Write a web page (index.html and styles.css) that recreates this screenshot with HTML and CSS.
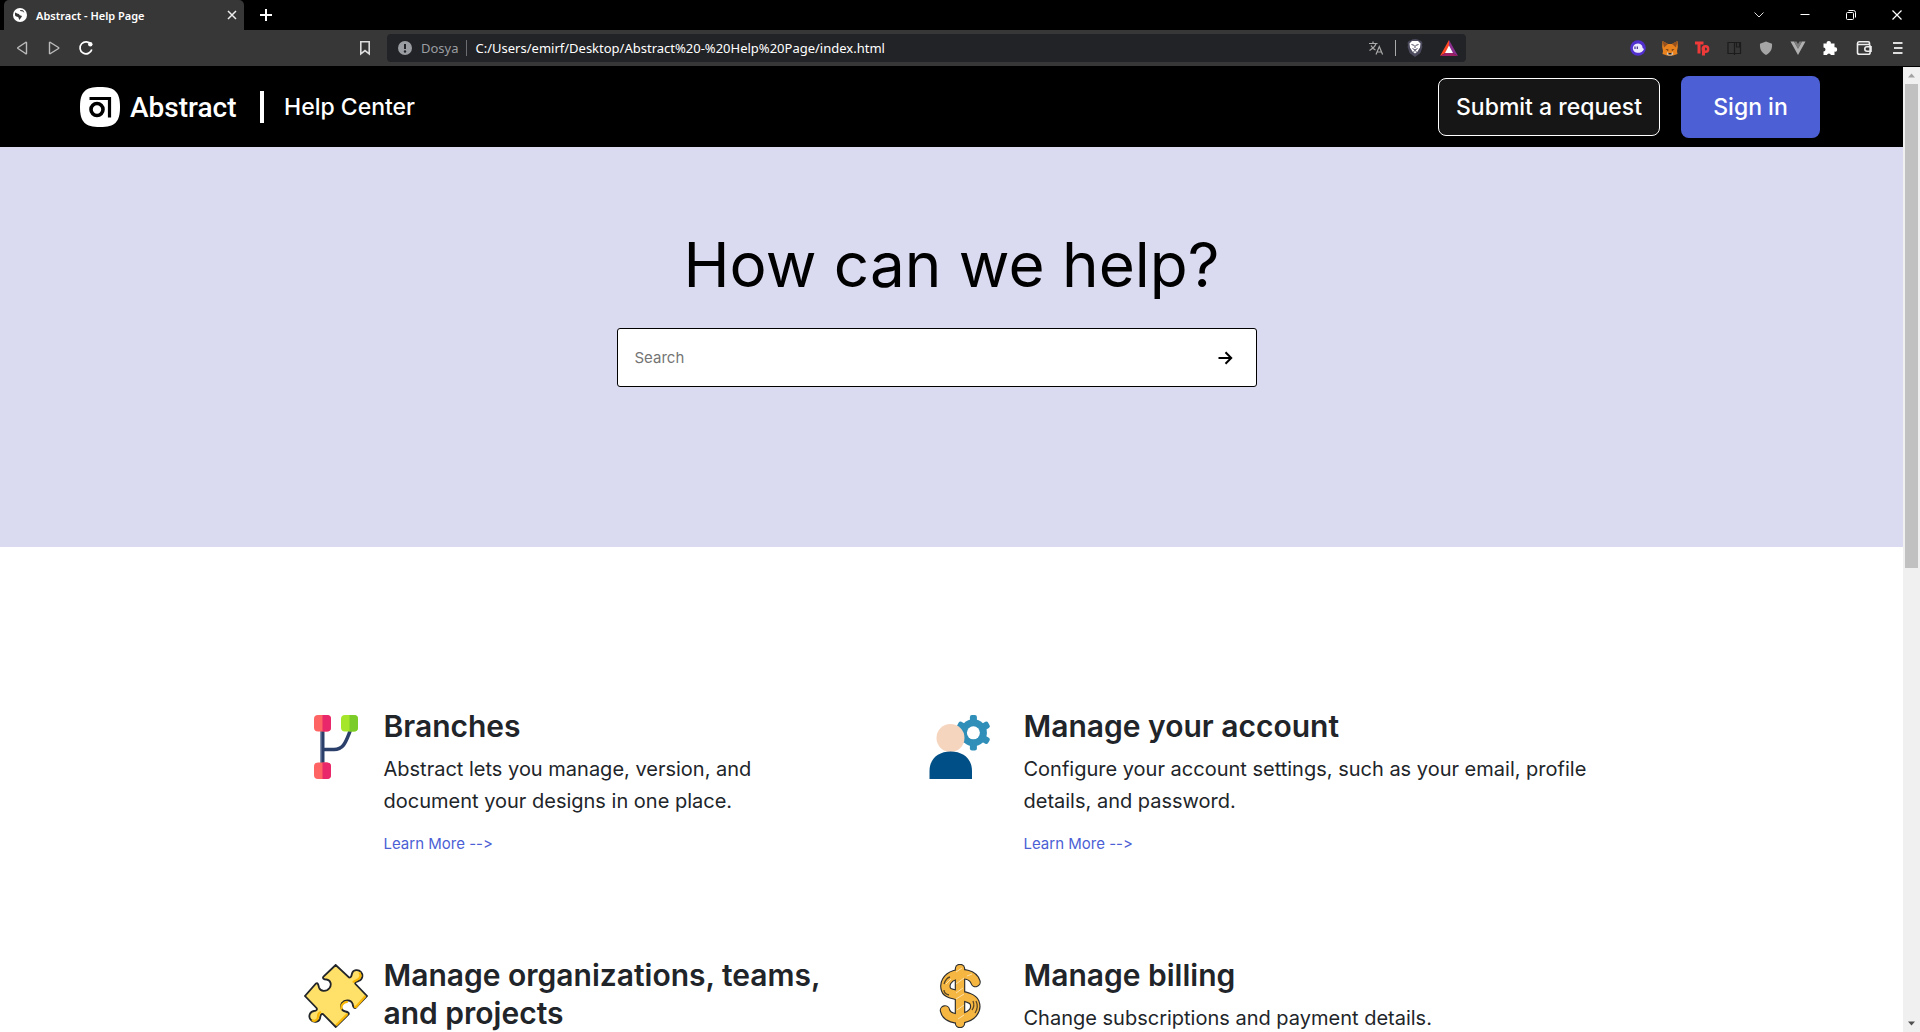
FILE: index.html
```html
<!DOCTYPE html>
<html lang="en">
<head>
<meta charset="utf-8">
<title>Abstract - Help Page</title>
<link rel="stylesheet" href="styles.css">
</head>
<body>
<div class="tabbar">
  <div class="tab">
    <svg class="favicon" viewBox="0 0 14 14" width="14" height="14"><circle cx="7" cy="7" r="7" fill="#fff"/><path d="M2 4.500c1 0 1.500 1.200 3 1.200s1 1.600 2.600 1.800 1.600 1 .6 2-1 2-2 2.300c-.6-1-.2-2-1-2.600S2 8.500 2 7zM7 2c0 1 1 1.300 2 1.200s1 1.200 2.400 1.200L10 2.300z" fill="#373737"/></svg>
    <span class="tab-title">Abstract - Help Page</span>
    <button class="icon-btn" aria-label="Close tab"><svg viewBox="0 0 16 16" width="16" height="16"><path d="M4 4l8 8M12 4l-8 8" stroke="#eee" stroke-width="1.500"/></svg></button>
  </div>
  <button class="icon-btn new-tab" aria-label="New tab"><svg viewBox="0 0 16 16" width="16" height="16"><path d="M8 2v12M2 8h12" stroke="#fff" stroke-width="2"/></svg></button>
  <div class="window-controls">
    <button class="icon-btn" aria-label="Search tabs"><svg viewBox="0 0 16 16" width="16" height="16"><path d="M3.500 5.500L8 10l4.500-4.500" fill="none" stroke="#ddd"/></svg></button>
    <button class="icon-btn" aria-label="Minimize"><svg viewBox="0 0 16 16" width="16" height="16"><path d="M3.500 7.500h9" stroke="#fff"/></svg></button>
    <button class="icon-btn" aria-label="Restore"><svg viewBox="0 0 16 16" width="16" height="16"><rect x="3.500" y="5.500" width="7" height="7" rx="1" fill="none" stroke="#fff"/><path d="M5.500 3.500h5a2 2 0 0 1 2 2v5" fill="none" stroke="#fff"/></svg></button>
    <button class="icon-btn" aria-label="Close"><svg viewBox="0 0 16 16" width="16" height="16"><path d="M3.500 3.500l9 9M12.500 3.500l-9 9" stroke="#fff" stroke-width="1.200"/></svg></button>
  </div>
</div>
<div class="toolbar">
  <div class="nav">
    <button class="icon-btn" aria-label="Back"><svg viewBox="0 0 16 16" width="16" height="16"><path d="M12.500 2.500v11q-.5.500-1 0L4 8.500q-.6-.5 0-1l7.500-5q.5-.5 1 0z" fill="none" stroke="#bbb" stroke-width="1.400"/></svg></button>
    <button class="icon-btn" aria-label="Forward"><svg viewBox="0 0 16 16" width="16" height="16"><path d="M3.500 2.500v11q.5.500 1 0l8-5q.6-.5 0-1l-8-5q-.5-.5-1 0z" fill="none" stroke="#bbb" stroke-width="1.400"/></svg></button>
    <button class="icon-btn" aria-label="Reload"><svg viewBox="0 0 16 16" width="16" height="16"><path d="M13 4.500A6 6 0 1 0 13.800 9.500" fill="none" stroke="#fff" stroke-width="1.700"/><circle cx="12.300" cy="4.300" r="2.200" fill="#fff"/></svg></button>
  </div>
  <button class="icon-btn bookmark" aria-label="Bookmark"><svg viewBox="0 0 16 16" width="16" height="16"><path d="M3.800 1.800h8.400v12L8 10.500l-4.200 3.300z" fill="none" stroke="#ddd" stroke-width="1.600"/></svg></button>
  <div class="address">
    <svg viewBox="0 0 14 14" width="14" height="14"><circle cx="7" cy="7" r="7" fill="#9a9da1"/><path d="M7 3v5" stroke="#222326" stroke-width="2"/><circle cx="7" cy="10.500" r="1.200" fill="#222326"/></svg>
    <span class="scheme">Dosya</span>
    <span class="rule"></span>
    <span class="url">C:/Users/emirf/Desktop/Abstract%20-%20Help%20Page/index.html</span>
    <div class="address-icons">
      <svg viewBox="0 0 16 16" width="16" height="16" fill="none" stroke="#aaa" stroke-width="1.200"><path d="M1 3.500h8.500M5 1.500v2M8 3.500C7 7 4 9 1.500 10.500M3 5.500c1 2 2.500 3.500 4.500 4.500M8 14.500l3.300-8 3.300 8M9.200 12h4.200"/></svg>
      <span class="rule light"></span>
      <svg viewBox="0 0 16 18" width="16" height="18"><path d="M8 0l3 .5 1 1 2 .3L15.500 4 15 6l.4 2-2 6L8 18l-5.400-4-2-6L1 6 .5 4 2 1.800l2-.3 1-1z" fill="#4c4b5e"/><path d="M5 2h6l2.500 2.500-.5 4-2.500 4L8 14.500l-2.500-2-2.500-4-.5-4z" fill="#fff"/><path d="M4.500 5.500l2.500.8M11.500 5.500L9 6.300M8 6v3M5.500 9.500L8 11l2.500-1.500M6.500 12.500L8 11.500l1.500 1" stroke="#4c4b5e" fill="none"/></svg>
      <svg viewBox="0 0 18 16" width="18" height="16"><path d="M9 0L0 16l9-5z" fill="#ff4724"/><path d="M9 0l9 16-9-5z" fill="#8b2e8e"/><path d="M0 16h18l-9-5z" fill="#9e1f63"/><path d="M9 5.500l4 7.500H5z" fill="#fff"/></svg>
    </div>
  </div>
  <div class="extensions">
    <svg viewBox="0 0 20 20" width="20" height="20"><circle cx="10" cy="10" r="7.800" fill="#5230cf"/><path d="M4.800 10a5.200 5 0 0 1 9.200-2.500c.6 1.400 0 2.500 2 3.500-1 3-4.500 4.200-7 3.800S4.800 12.500 4.800 10z" fill="#eeeaff"/><path d="M7 8.500v2.500M9.300 8.500v2.500" stroke="#41298f" stroke-width="1.200"/></svg>
    <svg viewBox="0 0 20 20" width="20" height="20"><path d="M2.500 3L8 6h4l5.500-3 .3 6-.8 4 .5 3-4.500 1.500-3 .2-3-.2L2.500 16l.5-3-.8-4z" fill="#e8821e"/><path d="M2.500 3L8 6 4 9.500zM17.500 3L12 6l4 3.500z" fill="#94501f"/><path d="M7 13.500l1 1.500h4l1-1.500.2 3-1.700 1h-3l-1.700-1z" fill="#d8c3ae"/><path d="M5.500 11l3 .5L8 13zM14.500 11l-3 .5.500 1.500z" fill="#533118"/><path d="M8.500 15h3v1.500h-3z" fill="#222"/></svg>
    <svg viewBox="0 0 20 20" width="20" height="20"><path d="M3 5h8.500M7 5v10.500M11.500 9v8.500" fill="none" stroke="#f03a3a" stroke-width="3"/><circle cx="13.500" cy="11" r="2.700" fill="none" stroke="#f03a3a" stroke-width="2.400"/></svg>
    <svg viewBox="0 0 20 20" width="20" height="20"><path d="M4 4.500h12.500v11H4zM10.500 4.500V17M12.500 5v4h3V5" fill="none" stroke="#1c1c1c" stroke-width="1.200"/></svg>
    <svg viewBox="0 0 20 20" width="20" height="20"><path d="M10 3.500l6 2.200c.4 4.500-1 8.800-6 11.300-5-2.500-6.400-6.800-6-11.300z" fill="#a5a5a5"/></svg>
    <svg viewBox="0 0 20 20" width="20" height="20"><path d="M2.500 3.500H6l4 7 4-7h3.500L10 17z" fill="#b0b0b0"/><path d="M6 3.500h2.500L10 6l1.500-2.500H14l-4 7.500z" fill="#7c7c7c"/></svg>
    <svg viewBox="0 0 20 20" width="20" height="20"><path d="M3.500 5.500h3.200a2.100 2.100 0 1 1 4.100 0h3.700v3.800a2.200 2.200 0 1 1 0 4.300V17h-3.600a2 2 0 0 0-3.900 0H3.500v-3.500a2 2 0 0 0 0-4z" fill="#fff"/></svg>
    <svg class="wide" viewBox="0 0 20 20" width="20" height="20"><path d="M15.500 6V5q0-1.200-1.200-1.200H5Q3.500 3.800 3.500 5.500v9q0 1.800 1.800 1.800h9q1.800 0 1.800-1.800V8q0-1.500-1.500-1.500H4M17 8.800h-4a2.200 2.200 0 0 0 0 4.400h4z" fill="none" stroke="#eee" stroke-width="1.600"/></svg>
    <svg class="wide" viewBox="0 0 20 20" width="20" height="20"><path d="M5 5h9.500M6 10h8.500M5 15h9.500" stroke="#ddd" stroke-width="2"/></svg>
  </div>
</div>

<div class="viewport">
  <div class="page">
    <header class="site-header">
      <a class="logo" href="#">
        <svg viewBox="0 0 40 40" width="40" height="40"><path d="M20 0c15 0 20 5 20 20s-5 20-20 20S0 35 0 20 5 0 20 0z" fill="#fff"/><path d="M9.500 11.500H29.500V30.500" fill="none" stroke="#000" stroke-width="3.200"/><circle cx="17" cy="22.500" r="6" fill="none" stroke="#000" stroke-width="3.600"/></svg>
        <span>Abstract</span>
      </a>
      <span class="divider"></span>
      <a class="help-center" href="#">Help Center</a>
      <div class="actions">
        <button class="btn submit">Submit a request</button>
        <button class="btn signin">Sign in</button>
      </div>
    </header>
    <section class="hero">
      <h1>How can we help?</h1>
      <form class="search">
        <input type="search" placeholder="Search" aria-label="Search">
        <button type="button" class="icon-btn" aria-label="Go"><svg viewBox="0 0 16 16" width="16" height="16"><path d="M1.500 8H14M8.500 2.300L14.200 8l-5.700 5.700" fill="none" stroke="#000" stroke-width="2"/></svg></button>
      </form>
    </section>
    <main class="topics">
      <article class="topic">
        <svg viewBox="0 0 64 64" width="64" height="64"><path d="M46.500 15C42 26 40 34.500 30 34.500H19" fill="none" stroke="#2b3f6b" stroke-width="3.500"/><path d="M18.500 14v36" stroke="#2b3f6b" stroke-width="4"/><path d="M17 14v36" stroke="#7382a3" stroke-width="1"/><rect x="10" y="0" width="17" height="16.500" rx="4" fill="#ff6464"/><path d="M18.500 0H23q4 0 4 4v8.500q0 4-4 4h-4.500z" fill="#e8286b"/><rect x="10" y="47.500" width="17" height="16.500" rx="4" fill="#ff6464"/><path d="M18.500 47.500H23q4 0 4 4V60q0 4-4 4h-4.500z" fill="#e8286b"/><rect x="37" y="0" width="17" height="16.500" rx="4" fill="#a5e62b"/><path d="M45.500 0H50q4 0 4 4v8.500q0 4-4 4h-4.500z" fill="#7bcc29"/></svg>
        <div>
          <h2>Branches</h2>
          <p>Abstract lets you manage, version, and document your designs in one place.</p>
          <a href="#">Learn More --&gt;</a>
        </div>
      </article>
      <article class="topic">
        <svg viewBox="0 0 64 64" width="64" height="64"><g fill="#308fb8"><circle cx="45.400" cy="17.800" r="13.500"/><rect x="41.900" y="0" width="7" height="35.600" rx="2"/><rect x="41.900" y="0" width="7" height="35.600" rx="2" transform="rotate(60 45.400 17.800)"/><rect x="41.900" y="0" width="7" height="35.600" rx="2" transform="rotate(120 45.400 17.800)"/></g><circle cx="45.400" cy="17.800" r="6.500" fill="#fff"/><circle cx="22.500" cy="23" r="14" fill="#f6d5bf"/><path d="M1.500 64V56C1.500 44 10 36.500 22.700 36.500S44 44 44 56v8z" fill="#004f87"/></svg>
        <div>
          <h2>Manage your account</h2>
          <p>Configure your account settings, such as your email, profile details, and password.</p>
          <a href="#">Learn More --&gt;</a>
        </div>
      </article>
      <article class="topic">
        <svg viewBox="0 0 64 64" width="64" height="64"><path d="M31.700 1L19.500 12.500c-1.500 2 .5 3 3 3 4 .5 5.500 5 3 8.500-3 4-9 4-10.500-.5-.6-2.500-1-5-3-4L1 32l11.500 12c1 1.500 0 3-2.500 3-4 .5-6 5-3.500 8.500s8.500 3 9.500-1c.5-3 1-5 3-4.500L31.700 63 44.500 50.500c1-1.500-.5-2.500-3-3-4-.5-5.500-5-3.500-8.500 3-4 9-3 10.500.5.500 2.500 1 5 3 4.500L63 32 51.500 20c-1-1.500.5-2.500 3-3 4-1 5-6 2.500-9s-8-2.500-9 1.500c-.5 2.500-1 4.500-3 4z" fill="#ffe069" stroke="#222529" stroke-width="1.800"/><path d="M32 61.500L43.500 50M8 56c3 2 6 0 6-3.500 0-2 1-4 3-4.500M37.800 45.500c-1.500-4 2-8 6-7.500M50 42.500l2 .5 9.500-11M49 18.500c2-3 7-2 7.500-7l-1-3" fill="none" stroke="#f9b806" stroke-width="2.200"/></svg>
        <div>
          <h2>Manage organizations, teams, and projects</h2>
        </div>
      </article>
      <article class="topic">
        <svg viewBox="0 0 64 64" width="64" height="64" fill="none"><g stroke="#2d2e30" stroke-width="10.500" stroke-linecap="round"><path d="M32 5v54"/><path d="M47.500 18C45 10 34 9 27 11c-8 2.500-11 9-9 14.500C20.500 33 43 30 46.500 38.500c3 8-3.500 14-11 15.500C28 55.500 18.500 53.500 17 46.500"/></g><g stroke="#f5b642" stroke-width="8.200" stroke-linecap="round"><path d="M47.500 18C45 10 34 9 27 11c-8 2.500-11 9-9 14.500C20.500 33 43 30 46.500 38.500c3 8-3.500 14-11 15.500C28 55.500 18.500 53.500 17 46.500"/><path d="M32 5v54"/></g><path d="M28 8l6-4M28 20l8-6M28 29l7-5M28 35l8-5M29 46l7-5M30 55l6-4M18 20l5-5M39 12l5-2" stroke="#fbe0ab" stroke-width="1"/><path d="M16 20q2-6 6-7M16 26q0 4 5 5M48 37q3 6-1 12M45 37q2 5-1 9" stroke="#5a4726" stroke-width="1.300"/></svg>
        <div>
          <h2>Manage billing</h2>
          <p>Change subscriptions and payment details.</p>
        </div>
      </article>
    </main>
  </div>
  <div class="scrollbar">
    <svg viewBox="0 0 17 17" width="17" height="17"><path d="M8.500 6.500l3.500 4H5z" fill="#a3a3a3"/></svg>
    <div class="track"><div class="thumb"></div></div>
    <svg viewBox="0 0 17 17" width="17" height="17"><path d="M8.500 10.500l3.500-4H5z" fill="#505050"/></svg>
  </div>
</div>
</body>
</html>
```
FILE: styles.css
```css
* { box-sizing: border-box; }

body {
  margin: 0;
  height: 100vh;
  display: flex;
  flex-direction: column;
  overflow: hidden;
  background: #fff;
  color: #212529;
  font-family: Inter, "Liberation Sans", sans-serif;
  font-feature-settings: "calt" 0;
}

svg { display: block; flex: none; }
a { text-decoration: none; }
button { font-family: inherit; cursor: pointer; }

.icon-btn {
  padding: 0;
  border: 0;
  background: none;
}

/* Browser window */
.tabbar,
.toolbar {
  flex: none;
  display: flex;
  align-items: center;
  font-family: "Noto Sans", sans-serif;
  color: #fff;
}
.tabbar {
  height: 30px;
  padding-left: 4px;
  background: #000;
}
.tab {
  display: flex;
  align-items: center;
  width: 240px;
  height: 30px;
  padding: 0 4px 0 9px;
  border-radius: 5px 5px 0 0;
  background: #373737;
}
.tab-title {
  flex: 1;
  margin-left: 9px;
  font-size: 11px;
  font-weight: 600;
}
.new-tab { margin-left: 14px; }
.window-controls {
  display: flex;
  gap: 30px;
  margin-left: auto;
  padding-right: 15px;
}

.toolbar {
  height: 36px;
  padding: 0 12px 0 14px;
  background: #373737;
}
.nav { display: flex; gap: 16px; }
.bookmark { margin-left: 263px; }
.address {
  flex: 1;
  display: flex;
  align-items: center;
  height: 28px;
  margin-left: 14px;
  padding: 0 8px 0 11px;
  border-radius: 4px;
  background: #222326;
  font-size: 13px;
}
.scheme { margin-left: 9px; color: #9a9da1; }
.rule {
  width: 1px;
  height: 16px;
  margin: 0 9px 0 7px;
  background: #6b6d70;
}
.rule.light { margin: 0; background: #aaa; }
.address-icons {
  display: flex;
  align-items: center;
  gap: 11px;
  margin-left: auto;
}
.address-icons svg:last-child { margin-left: 6px; }
.extensions {
  display: flex;
  gap: 12px;
  margin-left: 162px;
}
.wide { margin-left: 2px; }

/* Page area */
.viewport {
  flex: 1;
  min-height: 0;
  display: flex;
  border-top: 1px solid #000;
}
.page {
  flex: 1;
  min-width: 0;
  overflow: hidden;
}
.scrollbar {
  width: 17px;
  display: flex;
  flex-direction: column;
  background: #f0f0f0;
}
.track { flex: 1; padding: 0 2px; }
.thumb { height: 52%; background: #c1c1c1; }

.site-header {
  display: flex;
  align-items: center;
  height: 80px;
  padding: 0 83px 0 80px;
  background: #000;
}
.site-header a { color: #fff; }
.logo {
  display: flex;
  align-items: center;
  gap: 10px;
  width: 160px;
  font-family: Roboto, "Liberation Sans", sans-serif;
  font-size: 28px;
  font-weight: 500;
}
.divider {
  width: 4px;
  height: 32px;
  margin: 0 20px;
  background: #fff;
}
.help-center { font-size: 23px; font-weight: 500; }
.actions {
  display: flex;
  align-items: center;
  gap: 21px;
  margin-left: auto;
}
.btn {
  border-radius: 8px;
  color: #fff;
  font-size: 23px;
  font-weight: 500;
  white-space: nowrap;
}
.submit {
  width: 222px;
  height: 58px;
  padding: 0;
  border: 1px solid #fff;
  background: #161616;
}
.signin {
  width: 139px;
  height: 62px;
  border: 0;
  background: #4c5fd5;
}

.hero {
  height: 400px;
  padding-top: 72px;
  background: #dadaf0;
}
.hero h1 {
  margin: 0;
  color: #000;
  font-size: 62px;
  font-weight: 400;
  line-height: 92px;
  text-align: center;
}
.search {
  display: flex;
  align-items: center;
  width: 640px;
  max-width: 90%;
  height: 59px;
  margin: 17px auto 0 calc(50% - 335px);
  padding: 0 23px 0 17px;
  border: 1px solid #000;
  border-radius: 3px;
  background: #fff;
}
.search input {
  flex: 1;
  padding: 0;
  border: 0;
  outline: 0;
  background: none;
  font-family: inherit;
  font-size: 15px;
}
.search input::placeholder { color: #757575; }

.topics {
  display: grid;
  grid-template-columns: 17fr 21fr;
  gap: 100px 80px;
  max-width: 1296px;
  margin: 160px auto 0;
}
.topic { display: flex; gap: 16px; }
.topic:nth-child(even) { gap: 32px; }
.topic svg { margin-top: 8px; }
.topic h2 {
  margin: 0 0 8px;
  font-size: 30px;
  font-weight: 600;
  line-height: 38px;
}
.topic p {
  margin: 0 0 15px;
  font-size: 20px;
  line-height: 32px;
}
.topic a {
  display: block;
  color: #4c5fd5;
  font-size: 15px;
  line-height: 24px;
}
```
